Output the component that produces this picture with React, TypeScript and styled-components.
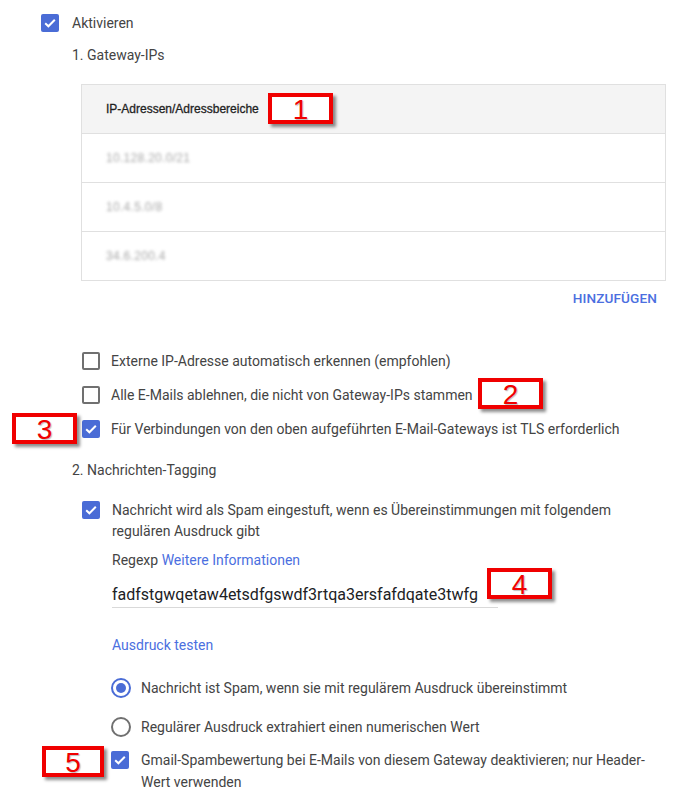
import React from "react";
import styled, { createGlobalStyle } from "styled-components";

const BLUE = "#4a6cd6";
const LINK = "#4b6fe0";

const Global = createGlobalStyle`
  html, body { margin: 0; padding: 0; background: #fff; }
  body {
    font-family: Roboto, "Noto Sans", Arial, sans-serif;
    font-size: 14px;
    color: #444;
  }
`;

const Page = styled.div`
  position: relative;
  width: 686px;
  height: 799px;
  box-sizing: border-box;
  padding-right: 24px;
  display: flex;
  flex-direction: column;
  overflow: hidden;
`;

const OptionRow = styled.div<{ $indent: number; $mt: number; $gap: number }>`
  display: flex;
  align-items: flex-start;
  gap: ${(p) => p.$gap}px;
  margin: ${(p) => p.$mt}px 0 0 ${(p) => p.$indent}px;
`;

const OptionText = styled.span<{ $lh: number }>`
  line-height: ${(p) => p.$lh}px;
  flex: 1;
`;

const Box = styled.span<{ $checked?: boolean; $mt?: number }>`
  flex: none;
  width: 18px;
  height: 18px;
  box-sizing: border-box;
  margin-top: ${(p) => p.$mt ?? 0}px;
  border-radius: 2px;
  display: inline-flex;
  align-items: center;
  justify-content: center;
  background: ${(p) => (p.$checked ? BLUE : "#fff")};
  border: ${(p) => (p.$checked ? "none" : "2px solid #707070")};
`;

const RadioRing = styled.span<{ $on?: boolean }>`
  flex: none;
  width: 20px;
  height: 20px;
  box-sizing: border-box;
  border-radius: 50%;
  border: 2px solid ${(p) => (p.$on ? BLUE : "#707070")};
  display: inline-flex;
  align-items: center;
  justify-content: center;
  &::after {
    content: "";
    width: 10px;
    height: 10px;
    border-radius: 50%;
    background: ${(p) => (p.$on ? BLUE : "transparent")};
  }
`;

const SectionTitle = styled.div<{ $mt: number }>`
  margin: ${(p) => p.$mt}px 0 0 72px;
  line-height: 20px;
`;

const IpTable = styled.div`
  margin: 19px 0 0 81px;
  width: 585px;
  box-sizing: border-box;
  border: 1px solid #e0e0e0;
`;

const HeaderCell = styled.div`
  height: 48px;
  background: #f4f4f4;
  display: flex;
  align-items: center;
  padding-left: 24px;
  font-family: "Liberation Sans", Arial, sans-serif;
  font-size: 12px;
  color: #1f1f1f;
  -webkit-text-stroke: 0.3px #1f1f1f;
`;

const DataRow = styled.div`
  height: 48px;
  border-top: 1px solid #e0e0e0;
  display: flex;
  align-items: center;
  padding-left: 24px;
`;

const Blurred = styled.span`
  font-family: "Liberation Sans", Arial, sans-serif;
  font-size: 12px;
  color: #a8a8a8;
  filter: blur(1.4px);
  letter-spacing: 0.3px;
`;

const AddButton = styled.div`
  align-self: flex-end;
  margin: 7px 5px 0 0;
  line-height: 20px;
  font-size: 13.6px;
  font-weight: 500;
  color: ${LINK};
  letter-spacing: 0.1px;
`;

const Link = styled.span`
  color: ${LINK};
`;

const Plain = styled.div<{ $mt: number; $indent: number }>`
  margin: ${(p) => p.$mt}px 0 0 ${(p) => p.$indent}px;
  line-height: 20px;
`;

const RegexInput = styled.div`
  margin: 13px 0 0 112px;
  width: 386px;
  height: 24px;
  line-height: 24px;
  border-bottom: 1px solid #d9d9d9;
  font-size: 16px;
  color: #202124;
`;

const Marker = styled.div<{ $x: number; $y: number; $w: number }>`
  position: absolute;
  left: ${(p) => p.$x}px;
  top: ${(p) => p.$y}px;
  width: ${(p) => p.$w}px;
  height: 31px;
  box-sizing: border-box;
  border: 4px solid #f00000;
  background: #fff;
  box-shadow: 3px 3px 3px rgba(0, 0, 0, 0.45);
  display: flex;
  justify-content: center;
  font-family: "Liberation Sans", Arial, sans-serif;
  font-size: 28px;
  line-height: 25px;
  color: #f00000;
  text-shadow: 1px 1px 1px rgba(0, 0, 0, 0.25);
`;

const Check = () => (
  <svg width="14" height="14" viewBox="0 0 14 14" aria-hidden>
    <path d="M2.2 7.2 L5.4 10.3 L11.8 3.8" fill="none" stroke="#fff" strokeWidth="2" />
  </svg>
);

const CheckBox = ({ checked, mt }: { checked?: boolean; mt?: number }) => (
  <Box $checked={checked} $mt={mt}>{checked && <Check />}</Box>
);

export default function App() {
  return (
    <>
      <Global />
      <Page>
        <OptionRow $indent={41} $mt={14} $gap={13}>
          <CheckBox checked />
          <OptionText $lh={18}>Aktivieren</OptionText>
        </OptionRow>

        <SectionTitle $mt={13}>1. Gateway-IPs</SectionTitle>

        <IpTable>
          <HeaderCell>IP-Adressen/Adressbereiche</HeaderCell>
          <DataRow><Blurred>10.128.20.0/21</Blurred></DataRow>
          <DataRow><Blurred>10.4.5.0/8</Blurred></DataRow>
          <DataRow><Blurred>34.6.200.4</Blurred></DataRow>
        </IpTable>

        <AddButton>HINZUFÜGEN</AddButton>

        <OptionRow $indent={82} $mt={44} $gap={11}>
          <CheckBox />
          <OptionText $lh={18}>Externe IP-Adresse automatisch erkennen (empfohlen)</OptionText>
        </OptionRow>
        <OptionRow $indent={82} $mt={16} $gap={11}>
          <CheckBox />
          <OptionText $lh={18}>Alle E-Mails ablehnen, die nicht von Gateway-IPs stammen</OptionText>
        </OptionRow>
        <OptionRow $indent={82} $mt={16} $gap={11}>
          <CheckBox checked />
          <OptionText $lh={18}>Für Verbindungen von den oben aufgeführten E-Mail-Gateways ist TLS erforderlich</OptionText>
        </OptionRow>

        <SectionTitle $mt={22}>2. Nachrichten-Tagging</SectionTitle>

        <OptionRow $indent={82} $mt={20} $gap={12}>
          <CheckBox checked mt={1} />
          <OptionText $lh={21}>
            Nachricht wird als Spam eingestuft, wenn es Übereinstimmungen mit folgendem regulären Ausdruck gibt
          </OptionText>
        </OptionRow>

        <Plain $mt={8} $indent={112}>
          Regexp <Link>Weitere Informationen</Link>
        </Plain>

        <RegexInput>fadfstgwqetaw4etsdfgswdf3rtqa3ersfafdqate3twfg</RegexInput>

        <Plain $mt={27} $indent={112}>
          <Link>Ausdruck testen</Link>
        </Plain>

        <OptionRow $indent={111} $mt={23} $gap={10}>
          <RadioRing $on />
          <OptionText $lh={20}>Nachricht ist Spam, wenn sie mit regulärem Ausdruck übereinstimmt</OptionText>
        </OptionRow>
        <OptionRow $indent={111} $mt={19} $gap={10}>
          <RadioRing />
          <OptionText $lh={20}>Regulärer Ausdruck extrahiert einen numerischen Wert</OptionText>
        </OptionRow>

        <OptionRow $indent={111} $mt={12} $gap={12}>
          <CheckBox checked mt={2} />
          <OptionText $lh={22}>
            Gmail-Spambewertung bei E-Mails von diesem Gateway deaktivieren; nur Header-Wert verwenden
          </OptionText>
        </OptionRow>

        <Marker $x={268} $y={93} $w={65}>1</Marker>
        <Marker $x={478} $y={378} $w={65}>2</Marker>
        <Marker $x={12} $y={413} $w={65}>3</Marker>
        <Marker $x={487} $y={568} $w={65}>4</Marker>
        <Marker $x={42} $y={746} $w={62}>5</Marker>
      </Page>
    </>
  );
}
